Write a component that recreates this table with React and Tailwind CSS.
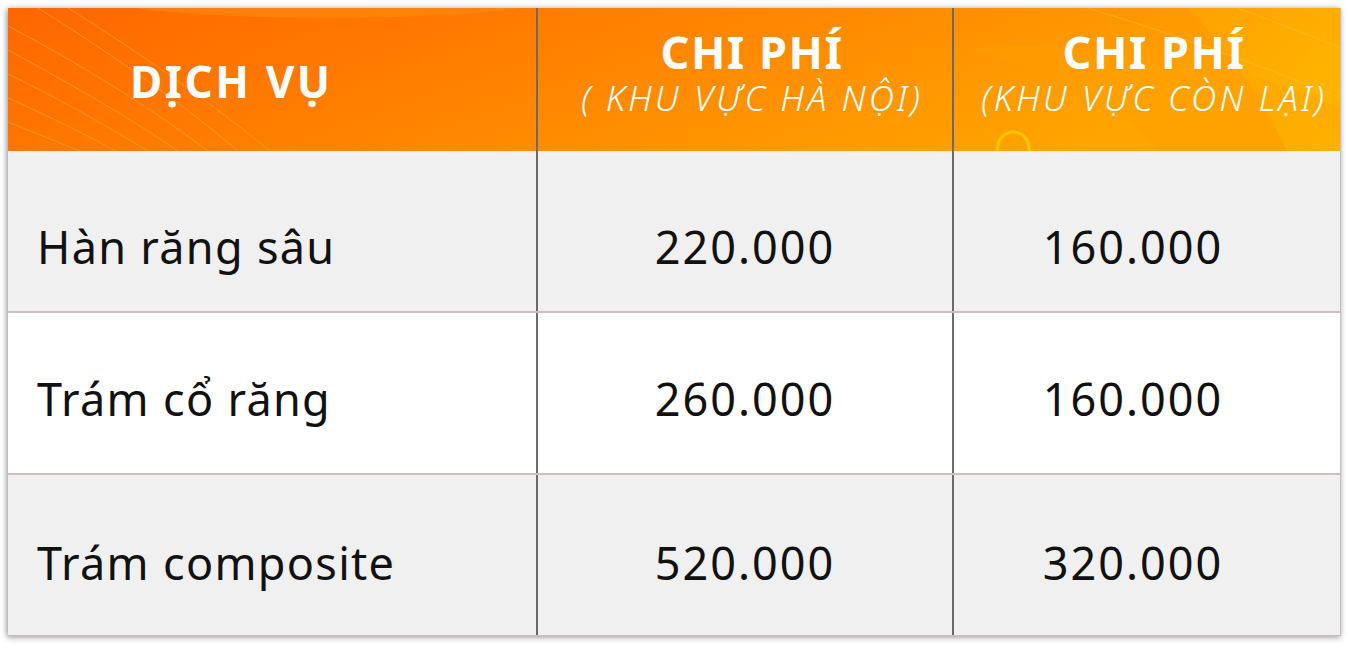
import React from "react";

const font = { fontFamily: '"Noto Sans", "DejaVu Sans", sans-serif' };

function HeaderDeco() {
  return (
    <svg className="absolute inset-0 w-full h-full pointer-events-none" viewBox="0 0 1333 143" preserveAspectRatio="none">
      <defs>
        <linearGradient id="hg" x1="0" y1="0" x2="1" y2="0.3">
          <stop offset="0" stopColor="#ff6600" />
          <stop offset="0.35" stopColor="#ff7a00" />
          <stop offset="0.6" stopColor="#ff8a00" />
          <stop offset="0.8" stopColor="#ff9800" />
          <stop offset="1" stopColor="#ffa400" />
        </linearGradient>
        <linearGradient id="yg" x1="0" y1="0" x2="1" y2="1">
          <stop offset="0" stopColor="#ffa200" />
          <stop offset="1" stopColor="#ffbd00" />
        </linearGradient>
      </defs>
      <rect width="1333" height="143" fill="url(#hg)" />
      <path d="M1180 0 C1230 50 1260 100 1280 143 L1333 143 L1333 0 Z" fill="url(#yg)" opacity="0.85" />
      <path d="M960 40 C1040 60 1120 100 1150 143 L1333 143 L1333 100 C1250 60 1100 30 960 40 Z" fill="#ffa000" opacity="0.35" />
      <ellipse cx="320" cy="-12" rx="230" ry="22" fill="#ff8a10" opacity="0.6" />
      <g stroke="#ffa030" strokeWidth="1" fill="none" opacity="0.7">
        <path d="M30 0 C110 50 180 100 230 143" />
        <path d="M0 18 C80 60 150 105 200 143" />
        <path d="M0 42 C70 80 130 115 170 143" />
        <path d="M0 66 C60 95 105 122 140 143" />
        <path d="M0 90 C45 110 80 128 108 143" />
        <path d="M0 114 C25 124 50 134 72 143" />
        <path d="M60 0 C140 50 210 100 262 143" />
      </g>
      <g stroke="#ffc040" strokeWidth="1" fill="none" opacity="0.5">
        <path d="M1080 0 C1180 30 1260 60 1333 90" />
        <path d="M1230 0 C1270 15 1310 30 1333 40" />
      </g>
      <path d="M990 143 C990 130 998 124 1006 124 C1014 124 1022 130 1022 143" stroke="#ffd000" strokeWidth="3" fill="none" opacity="0.8" />
    </svg>
  );
}

const rows = [
  { name: "Hàn răng sâu", a: "220.000", b: "160.000", bg: "bg-[#f0f0f0]", pt: "pt-[32px]" },
  { name: "Trám cổ răng", a: "260.000", b: "160.000", bg: "bg-white", pt: "pt-[12px]" },
  { name: "Trám composite", a: "520.000", b: "320.000", bg: "bg-[#f0f0f0]", pt: "pt-[16px]" },
];

export default function App() {
  return (
    <div className="w-[1346px] h-[645px] bg-white p-2" style={font}>
      <div className="w-[1333px] h-[628px] flex flex-col shadow-[-1px_1px_6px_rgba(0,0,0,0.45)] border-r border-b border-[#cbbcbc]">
        <div className="relative h-[143px] flex shrink-0 overflow-hidden">
          <HeaderDeco />
          <div className="relative w-[528px] flex items-center pl-[122px] pt-[2px] text-white font-bold text-[44px] tracking-[2.6px]">
            DỊCH VỤ
          </div>
          <div className="relative w-[416px] border-l-2 border-[#6a6a6a] flex flex-col items-center justify-start pt-[18px] text-white pl-[14px]">
            <div className="font-bold text-[45px] leading-[52px] tracking-[1.5px]">CHI PHÍ</div>
            <div className="italic text-[35px] leading-[40px] tracking-[3px] font-light">( KHU VỰC HÀ NỘI)</div>
          </div>
          <div className="relative flex-1 border-l-2 border-[#6a6a6a] flex flex-col items-center justify-start pt-[18px] text-white pl-[14px]">
            <div className="font-bold text-[45px] leading-[52px] tracking-[1.5px]">CHI PHÍ</div>
            <div className="italic text-[35px] leading-[40px] tracking-[3px] font-light">(KHU VỰC CÒN LẠI)</div>
          </div>
        </div>
        {rows.map((r, i) => (
          <div key={i} className={`flex flex-1 ${r.bg} ${i > 0 ? "border-t-2 border-[#cdbfbf]" : ""} text-[#111] text-[45px]`}>
            <div className={`w-[528px] flex items-center pl-[29px] tracking-[1.3px] ${r.pt}`}>{r.name}</div>
            <div className={`w-[416px] border-l-2 border-[#6a6a6a] flex items-center justify-center tracking-[2px] ${r.pt}`}>{r.a}</div>
            <div className={`flex-1 border-l-2 border-[#6a6a6a] flex items-center justify-center tracking-[2px] pr-[28px] ${r.pt}`}>{r.b}</div>
          </div>
        ))}
      </div>
    </div>
  );
}
